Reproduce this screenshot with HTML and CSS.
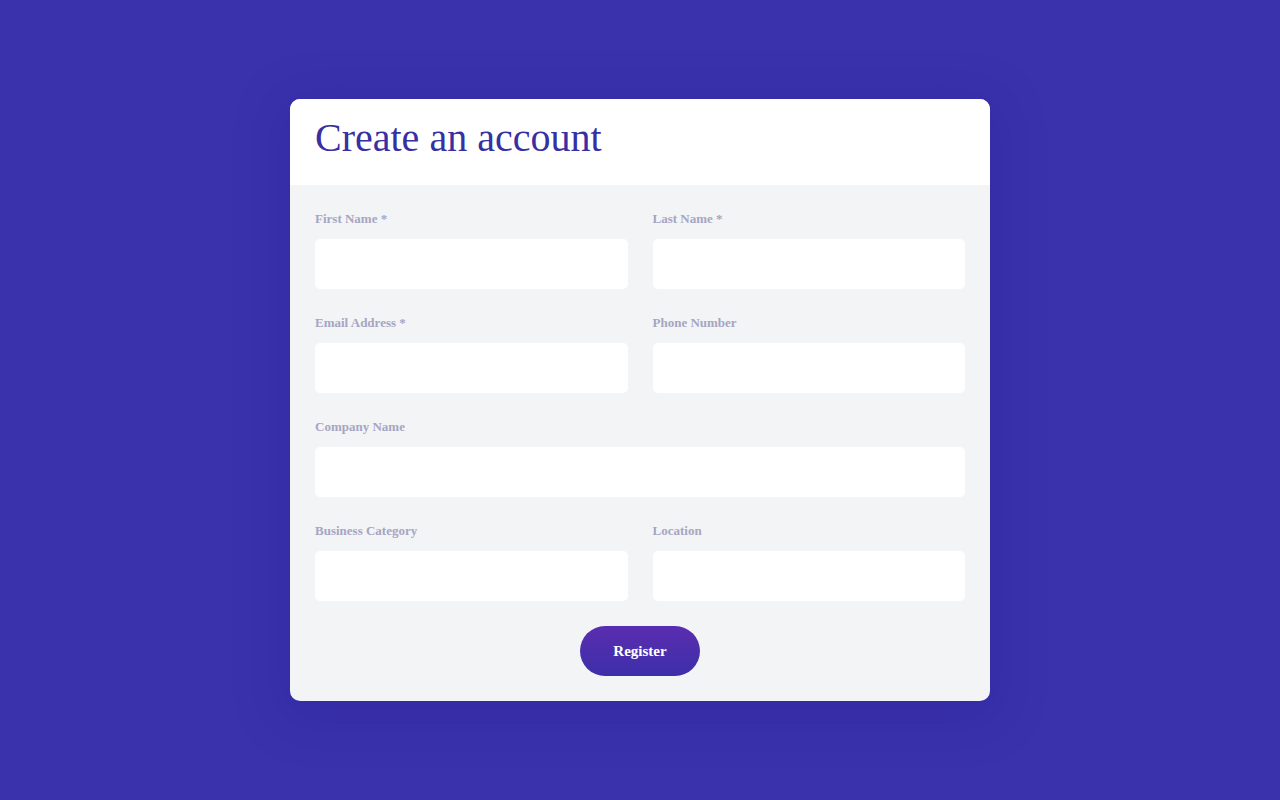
FILE: index.html
```html
<!DOCTYPE html>
<html lang="en">
<head>
<meta charset="utf-8">
<title>Create an account</title>
<link rel="stylesheet" href="styles.css">
</head>
<body>
<main class="page">
  <form class="card">
    <header class="card-head">
      <h1 class="title">Create an account</h1>
    </header>
    <div class="card-body">
      <div class="grid">
        <label class="field">
          <span class="label">First Name *</span>
          <input class="input" type="text">
        </label>
        <label class="field">
          <span class="label">Last Name *</span>
          <input class="input" type="text">
        </label>
        <label class="field">
          <span class="label">Email Address *</span>
          <input class="input" type="email">
        </label>
        <label class="field">
          <span class="label">Phone Number</span>
          <input class="input" type="tel">
        </label>
        <label class="field field-wide">
          <span class="label">Company Name</span>
          <input class="input" type="text">
        </label>
        <label class="field">
          <span class="label">Business Category</span>
          <input class="input" type="text">
        </label>
        <label class="field">
          <span class="label">Location</span>
          <input class="input" type="text">
        </label>
      </div>
      <div class="actions">
        <button class="btn" type="button">Register</button>
      </div>
    </div>
  </form>
</main>
</body>
</html>
```

FILE: styles.css
```css
* { box-sizing: border-box; }
html, body { margin: 0; padding: 0; }
body {
  background: #3a31ad;
  font-family: "Liberation Serif", "Times New Roman", serif;
  width: 1280px;
  height: 800px;
  overflow: hidden;
}
.page {
  height: 800px;
  display: flex;
  align-items: center;
  justify-content: center;
}
.card {
  width: 700px;
  border-radius: 10px;
  overflow: hidden;
  background: #f3f4f6;
  box-shadow: 0 10px 50px 10px rgba(30, 20, 130, 0.18);
}
.card-head {
  background: #ffffff;
  height: 86px;
  padding: 16px 25px 0;
}
.title {
  margin: 0;
  font-weight: 400;
  font-size: 40px;
  line-height: 46px;
  color: #3730a3;
}
.card-body {
  padding: 25px;
}
.grid {
  display: grid;
  grid-template-columns: 1fr 1fr;
  column-gap: 25px;
  row-gap: 25px;
}
.field {
  display: flex;
  flex-direction: column;
}
.field-wide { grid-column: 1 / -1; }
.label {
  font-size: 13px;
  font-weight: 700;
  line-height: 16px;
  padding-top: 1px;
  color: #a6a6c2;
  margin-bottom: 12px;
}
.input {
  height: 50px;
  border: none;
  border-radius: 5px;
  background: #ffffff;
  padding: 0 15px;
  font: inherit;
  outline: none;
}
.actions {
  display: flex;
  justify-content: center;
  margin-top: 25px;
}
.btn {
  width: 120px;
  height: 50px;
  border: none;
  border-radius: 25px;
  background: linear-gradient(180deg, #5a2db0 0%, #3d2fa9 100%);
  color: #ffffff;
  font-family: "Liberation Serif", "Times New Roman", serif;
  font-weight: 700;
  font-size: 15px;
  cursor: pointer;
}
```
